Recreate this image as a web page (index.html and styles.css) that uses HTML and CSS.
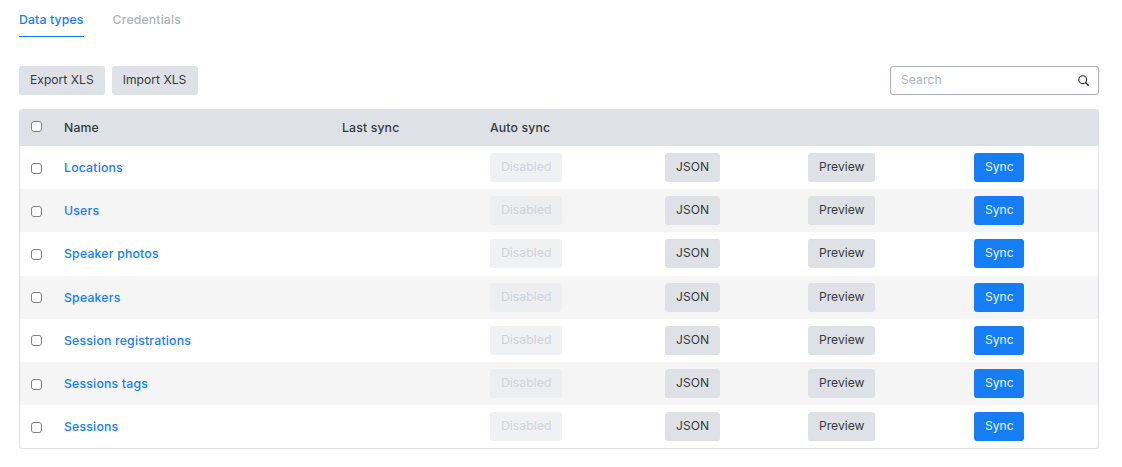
FILE: index.html
```html
<!DOCTYPE html>
<html lang="en">
<head>
<meta charset="utf-8">
<title>Data types</title>
<link rel="stylesheet" href="styles.css">
</head>
<body>
<nav class="tabs">
  <a class="tab active">Data types</a>
  <a class="tab">Credentials</a>
</nav>
<div class="toolbar">
  <div class="actions">
    <button class="btn">Export XLS</button>
    <button class="btn wide">Import XLS</button>
  </div>
  <div class="search">
    <span class="placeholder">Search</span>
    <svg class="search-icon" width="11" height="11" viewBox="0 0 11 11"><circle cx="4.7" cy="4.7" r="3.9" fill="none" stroke="#212529" stroke-width="1.1"/><path d="M7.5 7.5 10.6 10.6" stroke="#212529" stroke-width="1.4" fill="none"/></svg>
  </div>
</div>
<div class="table">
  <div class="row head">
    <span class="cell"><input type="checkbox" class="check"></span>
    <span class="cell">Name</span>
    <span class="cell">Last sync</span>
    <span class="cell">Auto sync</span>
  </div>
  <div class="row"><span class="cell"><input type="checkbox" class="check"></span><a class="cell link">Locations</a><span></span><span class="cell"><button class="btn off">Disabled</button></span><span class="cell"><button class="btn">JSON</button></span><span class="cell"><button class="btn trim">Preview</button></span><span class="cell"><button class="btn primary trim">Sync</button></span></div>
  <div class="row"><span class="cell"><input type="checkbox" class="check"></span><a class="cell link">Users</a><span></span><span class="cell"><button class="btn off">Disabled</button></span><span class="cell"><button class="btn">JSON</button></span><span class="cell"><button class="btn trim">Preview</button></span><span class="cell"><button class="btn primary trim">Sync</button></span></div>
  <div class="row"><span class="cell"><input type="checkbox" class="check"></span><a class="cell link">Speaker photos</a><span></span><span class="cell"><button class="btn off">Disabled</button></span><span class="cell"><button class="btn">JSON</button></span><span class="cell"><button class="btn trim">Preview</button></span><span class="cell"><button class="btn primary trim">Sync</button></span></div>
  <div class="row"><span class="cell"><input type="checkbox" class="check"></span><a class="cell link">Speakers</a><span></span><span class="cell"><button class="btn off">Disabled</button></span><span class="cell"><button class="btn">JSON</button></span><span class="cell"><button class="btn trim">Preview</button></span><span class="cell"><button class="btn primary trim">Sync</button></span></div>
  <div class="row"><span class="cell"><input type="checkbox" class="check"></span><a class="cell link">Session registrations</a><span></span><span class="cell"><button class="btn off">Disabled</button></span><span class="cell"><button class="btn">JSON</button></span><span class="cell"><button class="btn trim">Preview</button></span><span class="cell"><button class="btn primary trim">Sync</button></span></div>
  <div class="row"><span class="cell"><input type="checkbox" class="check"></span><a class="cell link">Sessions tags</a><span></span><span class="cell"><button class="btn off">Disabled</button></span><span class="cell"><button class="btn">JSON</button></span><span class="cell"><button class="btn trim">Preview</button></span><span class="cell"><button class="btn primary trim">Sync</button></span></div>
  <div class="row"><span class="cell"><input type="checkbox" class="check"></span><a class="cell link">Sessions</a><span></span><span class="cell"><button class="btn off">Disabled</button></span><span class="cell"><button class="btn">JSON</button></span><span class="cell"><button class="btn trim">Preview</button></span><span class="cell"><button class="btn primary trim">Sync</button></span></div>
</div>
</body>
</html>
```
FILE: styles.css
```css
* { box-sizing: border-box; }
body {
  margin: 0;
  padding: 0 23px 0 19px;
  background: #fff;
  color: #212529;
  font: 12.25px/18px Inter, "Liberation Sans", sans-serif;
}
.tabs { display: flex; gap: 29px; height: 37px; }
.tab { height: 37px; padding-top: 11px; color: #adb5bd; font-weight: 500; letter-spacing: 0.15px; }
.tab.active { color: #157ef5; border-bottom: 1px solid #157ef5; }
.toolbar {
  display: flex;
  justify-content: space-between;
  align-items: flex-start;
  margin-top: 29px;
}
.actions { display: flex; gap: 7px; }
.btn {
  height: 29px;
  padding: 0 11px 1px;
  border: 0;
  border-radius: 3px;
  background: #dee2e6;
  color: #343a40;
  font: inherit;
  font-size: 12.1px;
  letter-spacing: 0.02px;
}
.btn.wide { padding-right: 12px; }
.btn.trim { padding-right: 10px; }
.btn.off { background: #f0f1f3; color: #ced4da; font-size: 12.25px; }
.row:nth-child(odd) .btn.off { background: #eceef0; }
.btn.primary { background: #157ef5; color: #eef6ff; }
.search {
  display: flex;
  justify-content: space-between;
  align-items: center;
  width: 209px;
  height: 29px;
  padding: 0 9px 1px 10px;
  border: 1px solid #a5b0bb;
  border-radius: 3px;
}
.placeholder { color: #adb5bd; }
.table {
  margin-top: 14px;
  height: 340px;
  border: 1px solid #dee2e6;
  border-top: 0;
  border-radius: 3px;
  overflow: hidden;
}
.row {
  display: grid;
  grid-template-columns: 33px 278px 148px 175px 143px 166px 1fr;
  align-items: center;
  height: 43.2px;
}
.row .cell { padding-left: 11px; }
.row .link { padding-top: 1px; letter-spacing: 0.2px; }
.row:nth-child(odd) { background: #f5f5f5; }
.row.head {
  height: 37px;
  margin: 0 -1px;
  padding-left: 1px;
  background: #dee2e6;
  font-weight: 500;
  color: #343a40;
  letter-spacing: 0.15px;
}
.link { color: #157ef5; font-weight: 500; }
.check {
  display: block;
  width: 11px;
  height: 11px;
  margin: 0 0 0 -0.5px;
  appearance: none;
  background: #fff;
  border: 1px solid #808080;
  border-radius: 3px;
}
.row .check { margin-top: 1px; }
.row.head .check { margin-top: -2px; }
.search-icon { display: block; }
```
